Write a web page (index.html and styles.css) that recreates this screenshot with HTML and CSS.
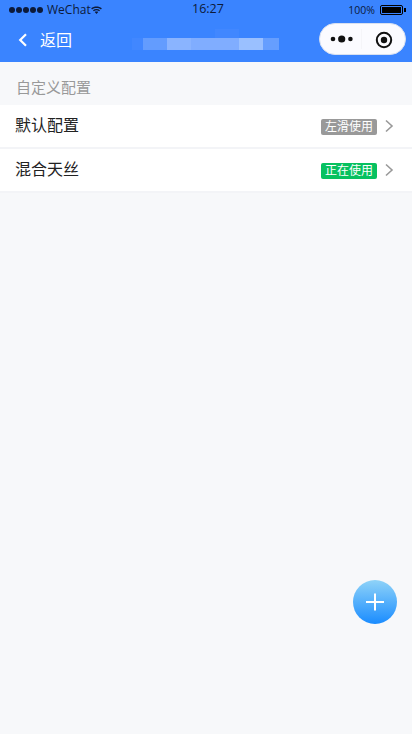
FILE: index.html
```html
<!DOCTYPE html>
<html lang="zh">
<head>
<meta charset="utf-8">
<title>自定义配置</title>
<link rel="stylesheet" href="styles.css">
</head>
<body>
<div class="page">
  <header class="header">
    <div class="status">
      <div class="status-left">
        <span class="dots"><i></i><i></i><i></i><i></i><i></i></span>
        <span class="carrier">WeChat</span>
        <svg class="wifi" width="11" height="8" viewBox="0 0 12 9"><path d="M0 2.600C3.400 0 8.600 0 12 2.600L11 3.800C8 1.600 4 1.600 1 3.800Z" fill="#0c1a3a"/><path d="M2 4.700C4.400 3 7.600 3 10 4.700L9 5.800C7 4.500 5 4.500 3 5.800Z" fill="#0c1a3a"/><path d="M4 6.700C5.200 6 6.800 6 8 6.700L6 9Z" fill="#0c1a3a"/></svg>
      </div>
      <span class="time">16:27</span>
      <div class="status-right">
        <span class="pct">100%</span>
        <span class="battery"><i></i></span>
        <span class="nub"></span>
      </div>
    </div>
    <div class="nav">
      <div class="back">
        <svg class="chev" width="10" height="14" viewBox="0 0 10 14"><path d="M8 1.200 2.200 7 8 12.800" fill="none" stroke="#fff" stroke-width="2.200"/></svg>
        <span>返回</span>
      </div>
      <svg class="blur" width="147" height="21" viewBox="0 0 147 21" shape-rendering="crispEdges">
        <rect x="83" y="0" width="24" height="9" fill="#4187ff"/>
        <rect x="0" y="9" width="11" height="12" fill="#4187ff"/>
        <rect x="11" y="9" width="24" height="12" fill="#639cfe"/>
        <rect x="35" y="9" width="24" height="12" fill="#8ab4ff"/>
        <rect x="59" y="9" width="48" height="12" fill="#80adff"/>
        <rect x="107" y="9" width="24" height="12" fill="#9ac0ff"/>
        <rect x="131" y="9" width="16" height="12" fill="#669efe"/>
      </svg>
      <div class="capsule">
        <svg class="more" width="26" height="8" viewBox="0 0 26 8"><circle cx="3" cy="4" r="2.300" fill="#111"/><circle cx="11.700" cy="4" r="3.600" fill="#111"/><circle cx="20.400" cy="4" r="2.300" fill="#111"/></svg>
        <span class="sep"></span>
        <svg class="target" width="18" height="18" viewBox="0 0 18 18"><circle cx="9" cy="9" r="7.200" fill="none" stroke="#111" stroke-width="2"/><circle cx="9" cy="9" r="3.200" fill="#111"/></svg>
      </div>
    </div>
  </header>
  <main>
    <div class="section-title">自定义配置</div>
    <div class="row">
      <span class="name">默认配置</span>
      <span class="tag tag-gray">左滑使用</span>
      <svg class="arrow" width="10" height="14" viewBox="0 0 10 14"><path d="M2 1.500 8 7 2 12.500" fill="none" stroke="#999" stroke-width="1.600"/></svg>
    </div>
    <div class="row">
      <span class="name">混合天丝</span>
      <span class="tag tag-green">正在使用</span>
      <svg class="arrow" width="10" height="14" viewBox="0 0 10 14"><path d="M2 1.500 8 7 2 12.500" fill="none" stroke="#999" stroke-width="1.600"/></svg>
    </div>
  </main>
  <button class="fab" aria-label="添加">
    <svg width="20" height="20" viewBox="0 0 20 20"><path d="M10 1.500V18.500M1 10H19" stroke="#fff" stroke-width="2"/></svg>
  </button>
</div>
</body>
</html>
```
FILE: styles.css
```css
* { box-sizing: border-box; }
html, body { margin: 0; padding: 0; }
body { font-family: "Liberation Sans", "Noto Sans CJK SC", sans-serif; background: #f7f8fa; }
.page { position: relative; width: 412px; height: 734px; overflow: hidden; background: #f7f8fa; }
.header { background: #3a84ff; height: 62px; }
.status { height: 20px; padding: 0 6px 0 9px; display: flex; align-items: center; position: relative; color: #0c1a3a; font-size: 12px; }
.status-left { display: flex; align-items: center; flex: 1; }
.dots { display: flex; gap: 1px; margin-right: 4px; }
.dots i { width: 6px; height: 6px; border-radius: 50%; background: #0c1a3a; }
.carrier { font-family: "Open Sans", sans-serif; font-size: 12px; margin-top: -2px; }
.time { font-family: "Open Sans", sans-serif; font-size: 12.500px; position: absolute; left: 192px; top: 0; }
.status-right { display: flex; align-items: center; }
.pct { font-family: "Open Sans", sans-serif; font-size: 10.500px; margin-right: 5px; }
.battery { width: 23px; height: 10px; border: 1.500px solid #000; border-radius: 2px; padding: 1px; display: flex; }
.battery i { flex: 1; background: #000; }
.nub { width: 2px; height: 4px; background: #000; margin-left: 1px; }
.nav { height: 42px; position: relative; display: flex; align-items: center; padding: 0 6px 4px 18px; }
.back { display: flex; align-items: center; gap: 12px; color: #fff; font-size: 16px; flex: 1; }
.chev { margin-top: 1px; }
.blur { position: absolute; left: 132px; top: 9px; }
.capsule { width: 87px; height: 32px; border-radius: 16px; background: #fbfbff; border: 1px solid #d8e0f0; display: flex; align-items: center; padding-left: 10px; }
.sep { width: 1px; height: 20px; background: #f5f5f9; margin: 0 13px 0 5px; }
.target { margin-top: 2px; }
.section-title { height: 43px; padding: 16px 16px 0; font-size: 15px; line-height: 20px; color: #999; }
.row { height: 44px; background: #fff; display: flex; align-items: center; padding: 0 18px 0 15px; border-bottom: 2px solid #f3f4f7; }
.name { flex: 1; font-size: 16px; line-height: 20px; color: #222; margin-top: -1px; }
.tag { width: 56px; height: 16px; border-radius: 2px; color: #fff; font-size: 12px; line-height: 16px; text-align: center; margin: 2px 7px 0 0; }
.tag-gray { background: #999; }
.tag-green { background: #07c160; }
.fab { position: absolute; left: 353px; top: 580px; width: 44px; height: 44px; padding: 0; border: 0; border-radius: 50%; background: linear-gradient(#8fd3f8, #1a8cff); display: flex; align-items: center; justify-content: center; }
```
